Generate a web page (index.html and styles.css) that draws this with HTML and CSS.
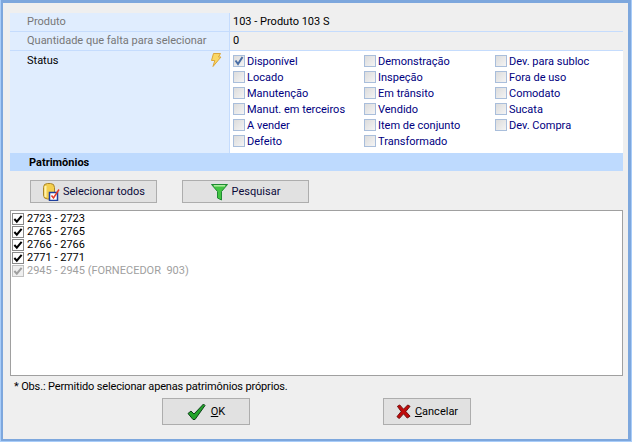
FILE: index.html
```html
<!DOCTYPE html>
<html lang="pt">
<head>
<meta charset="utf-8">
<title>Patrimônios</title>
<link rel="stylesheet" href="styles.css">
</head>
<body>
<div class="window">
  <div class="form">
    <div class="row row-top">
      <div class="label muted">Produto</div>
      <div class="value gray">103 - Produto 103 S</div>
    </div>
    <div class="row row-second">
      <div class="label muted">Quantidade que falta para selecionar</div>
      <div class="value gray">0</div>
    </div>
    <div class="row row-status">
      <div class="label status-label">
        <span>Status</span>
        <svg class="bolt" width="12" height="14" viewBox="0 0 12 14"><path d="M3.500.5h7L8.500 4H11L3 13.500 4.800 7.500H1.500z" fill="#f9d766" stroke="#dca63a"/></svg>
      </div>
      <div class="value status-grid">
        <label class="opt"><i class="box on"><svg width="10" height="10" viewBox="0 0 10 10"><path d="M1.500 4.500 4 8l4.500-7" fill="none" stroke="#4a6ea5" stroke-width="2"/></svg></i>Disponível</label>
        <label class="opt"><i class="box"></i>Demonstração</label>
        <label class="opt"><i class="box"></i>Dev. para subloc</label>
        <label class="opt"><i class="box"></i>Locado</label>
        <label class="opt"><i class="box"></i>Inspeção</label>
        <label class="opt"><i class="box"></i>Fora de uso</label>
        <label class="opt"><i class="box"></i>Manutenção</label>
        <label class="opt"><i class="box"></i>Em trânsito</label>
        <label class="opt"><i class="box"></i>Comodato</label>
        <label class="opt"><i class="box"></i>Manut. em terceiros</label>
        <label class="opt"><i class="box"></i>Vendido</label>
        <label class="opt"><i class="box"></i>Sucata</label>
        <label class="opt"><i class="box"></i>A vender</label>
        <label class="opt"><i class="box"></i>Item de conjunto</label>
        <label class="opt"><i class="box"></i>Dev. Compra</label>
        <label class="opt"><i class="box"></i>Defeito</label>
        <label class="opt"><i class="box"></i>Transformado</label>
      </div>
    </div>
    <div class="section">Patrimônios</div>
  </div>
  <div class="tools">
    <button class="btn btn-tool">
      <svg width="18" height="18" viewBox="0 0 18 18"><rect x="1.500" y="0.500" width="11" height="15.500" rx="4" fill="#f4cf4e" stroke="#a8842a"/><path d="M3.500 3v11" stroke="#fff2ae" stroke-width="2"/><rect x="7.500" y="9.500" width="8" height="8" fill="#fff" stroke="#1e3f9e" stroke-width="1.500"/><path d="M9.500 12.500l2 2.500L17 6.500" fill="none" stroke="#e23a2a" stroke-width="1.500"/></svg>
      <span>Selecionar todos</span>
    </button>
    <button class="btn btn-tool">
      <svg width="18" height="18" viewBox="0 0 18 18"><path d="M.5 1.500h16L10.500 8.500v8.500l-4-2V8.500z" fill="#43c443" stroke="#1f8a33"/><path d="M3 2.800h11" stroke="#b8f0a8" stroke-width="1.400"/></svg>
      <span>Pesquisar</span>
    </button>
  </div>
  <div class="list">
    <div class="item"><i class="tick"><svg width="10" height="10" viewBox="0 0 11 11"><path d="M1.500 5.500 4.200 8.500 9.500 2" fill="none" stroke="#000" stroke-width="2.200"/></svg></i>2723 - 2723</div>
    <div class="item"><i class="tick"><svg width="10" height="10" viewBox="0 0 11 11"><path d="M1.500 5.500 4.200 8.500 9.500 2" fill="none" stroke="#000" stroke-width="2.200"/></svg></i>2765 - 2765</div>
    <div class="item"><i class="tick"><svg width="10" height="10" viewBox="0 0 11 11"><path d="M1.500 5.500 4.200 8.500 9.500 2" fill="none" stroke="#000" stroke-width="2.200"/></svg></i>2766 - 2766</div>
    <div class="item"><i class="tick"><svg width="10" height="10" viewBox="0 0 11 11"><path d="M1.500 5.500 4.200 8.500 9.500 2" fill="none" stroke="#000" stroke-width="2.200"/></svg></i>2771 - 2771</div>
    <div class="item disabled"><i class="tick"><svg width="10" height="10" viewBox="0 0 11 11"><path d="M1.500 5.500 4.200 8.500 9.500 2" fill="none" stroke="#a0a0a0" stroke-width="2.200"/></svg></i>2945 - 2945 (FORNECEDOR&nbsp; 903)</div>
  </div>
  <div class="note">* Obs.: Permitido selecionar apenas patrimônios próprios.</div>
  <div class="actions">
    <button class="btn btn-action">
      <svg width="20" height="18" viewBox="0 0 20 18"><path d="M1 10.500l3-2.500 3 3L16.500 1l1.500 1.500L8 16.500H6z" fill="#22a32a" stroke="#0d3f1a"/></svg>
      <span><u>O</u>K</span>
    </button>
    <button class="btn btn-action">
      <svg width="15" height="15" viewBox="0 0 16 16"><path d="M1.500 2.500L4 1l4 4.500L12.500 1 15 2.500 10.500 8 15 13l-3 2-4-4.500L3.500 15.500 1 13.500 5.500 8z" fill="#c00a0a" stroke="#6c0a0a"/></svg>
      <span><u>C</u>ancelar</span>
    </button>
  </div>
</div>
</body>
</html>
```
FILE: styles.css
```css
* { box-sizing: border-box; }
html, body { margin: 0; padding: 0; }
body { width: 632px; height: 442px; background: #a9cdf9; font-family: Roboto, sans-serif; font-size: 11px; color: #000; }
.window { width: 630px; height: 441px; margin: 0 1px; background: #efefef; border-style: solid; border-color: #7da7dd; border-width: 3px 3px 2px 2px; padding: 10px 0 0 7px; display: flex; flex-direction: column; }
.form { width: 613px; background: #e0edfe; }
.row { display: flex; border-bottom: 1px solid #c5dcfd; }
.row-top { height: 19px; }
.row-second { height: 19px; }
.row-status { height: 102px; border-bottom: 0; }
.label { width: 220px; padding: 2px 0 0 17px; border-right: 1px solid #c5dcfd; flex: none; }
.muted { color: #777; }
.value { flex: 1; padding: 2px 0 0 3px; }
.gray { background: #efefef; }
.status-label { display: flex; justify-content: space-between; padding: 3px 7px 0 17px; }
.bolt { margin-top: -1px; }
.status-grid { background: #fff; padding: 2px 0 0 3px; display: grid; grid-template-columns: 131px 131px 1fr; grid-auto-rows: 16px; color: #000080; }
.opt { display: flex; align-items: center; gap: 2px; }
.box { width: 12px; height: 12px; border: 1px solid #a9bedb; background: linear-gradient(135deg, #dcdcdc, #f4f4f4); display: flex; align-items: center; justify-content: center; flex: none; }
.section { height: 18px; background: #bedafe; font-weight: bold; padding: 3px 0 0 19px; }
.tools { display: flex; gap: 25px; padding: 9px 0 0 20px; height: 39px; }
.btn { height: 23px; background: #e1e1e1; border: 1px solid #adadad; font: inherit; color: #000; padding: 0; display: flex; align-items: center; justify-content: center; gap: 3px; }
.btn-tool { width: 127px; color: #0a0a3a; }
.list { width: 613px; height: 166px; background: #fff; border: 1px solid #a0a0a0; padding: 1px 0 0 1px; }
.item { height: 13px; display: flex; align-items: center; gap: 3px; line-height: 13px; }
.disabled { color: #a0a0a0; }
.tick { width: 12px; height: 12px; border: 1px solid #8a8a8a; background: #fff; display: flex; align-items: center; justify-content: center; flex: none; }
.disabled .tick { border-color: #c0c0c0; background: #efefef; }
.note { height: 18px; padding: 4px 0 0 4px; letter-spacing: -0.15px; }
.actions { display: flex; gap: 133px; padding: 4px 0 0 152px; }
.btn-action { width: 88px; height: 27px; gap: 4px; }
```
